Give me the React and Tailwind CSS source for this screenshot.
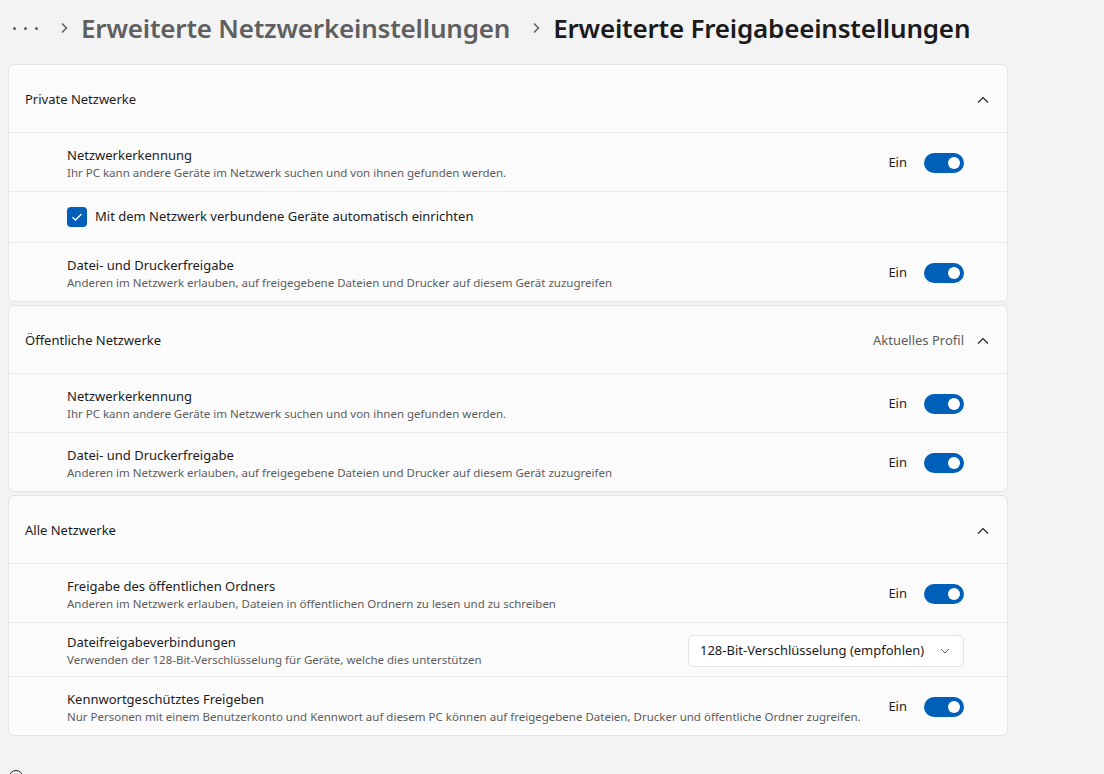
import React from 'react';

const FONT = { fontFamily: '"Noto Sans", "Open Sans", sans-serif' };

const ChevronUp = () => (
    <svg width="12" height="8" viewBox="0 0 12 8" className="text-[#1b1b1b]">
        <path d="M1 6.5 L6 1.5 L11 6.5" fill="none" stroke="currentColor" strokeWidth="1.1" />
    </svg>
);

const ChevronRight = () => (
    <svg width="8" height="12" viewBox="0 0 8 12" className="text-[#5f5f5f]">
        <path d="M2 1.5 L6.5 6 L2 10.5" fill="none" stroke="currentColor" strokeWidth="1.5" />
    </svg>
);

const Toggle = () => (
    <div className="flex items-center gap-[17px]">
        <span className="text-[13px] text-[#1b1b1b]">Ein</span>
        <div className="w-10 h-5 rounded-full bg-[#005fb8] flex items-center justify-end pr-[4px]">
            <div className="w-3 h-3 rounded-full bg-white" />
        </div>
    </div>
);

const CardHeader = ({ title, extra }) => (
    <div className="h-[67px] flex items-center justify-between pl-4 pr-[18px] pt-[2px]">
        <span className="text-[13px] text-[#1b1b1b]">{title}</span>
        <div className="flex items-center gap-[13px]">
            {extra && <span className="text-[13px] text-[#5d5d5d]">{extra}</span>}
            <ChevronUp />
        </div>
    </div>
);

const Row = ({ title, desc, height = 'h-[59px]', children }) => (
    <div className={`${height} border-t border-[#ebebeb] flex items-center justify-between pl-[58px] pr-[43px] pt-[2px]`}>
        <div className="flex flex-col">
            <span className="text-[13px] leading-[19px] text-[#1b1b1b]">{title}</span>
            <span className="text-[11.5px] leading-[16px] text-[#5d5d5d]">{desc}</span>
        </div>
        {children}
    </div>
);

const DESC_DISCOVERY = 'Ihr PC kann andere Geräte im Netzwerk suchen und von ihnen gefunden werden.';
const DESC_SHARING = 'Anderen im Netzwerk erlauben, auf freigegebene Dateien und Drucker auf diesem Gerät zuzugreifen';

const App = () => {
    return (
        <div className="w-[1104px] h-[774px] overflow-hidden bg-[#f3f3f3]" style={FONT}>
            {/* Breadcrumb */}
            <div className="h-[56px] flex items-center pl-[13px]">
                <div className="flex items-center gap-[8px]">
                    <div className="w-[3px] h-[3px] rounded-full bg-[#5f5f5f]" />
                    <div className="w-[3px] h-[3px] rounded-full bg-[#5f5f5f]" />
                    <div className="w-[3px] h-[3px] rounded-full bg-[#5f5f5f]" />
                </div>
                <div className="ml-[22px] mr-[13px]"><ChevronRight /></div>
                <span className="text-[26px] font-semibold text-[#5f5f5f] tracking-[-0.2px]">Erweiterte Netzwerkeinstellungen</span>
                <div className="ml-[22px] mr-[13px]"><ChevronRight /></div>
                <span className="text-[26px] font-semibold text-[#1b1b1b] tracking-[-0.2px]">Erweiterte Freigabeeinstellungen</span>
            </div>

            <div className="pl-2 w-[1008px] flex flex-col gap-[3px] mt-[8px]">
                {/* Private */}
                <div className="bg-[#fbfbfb] border border-[#e5e5e5] rounded-md">
                    <CardHeader title="Private Netzwerke" />
                    <Row title="Netzwerkerkennung" desc={DESC_DISCOVERY}>
                        <Toggle />
                    </Row>
                    <div className="h-[51px] border-t border-[#ebebeb] flex items-center pl-[58px]">
                        <div className="w-5 h-5 rounded-[4px] bg-[#005fb8] flex items-center justify-center">
                            <svg width="12" height="10" viewBox="0 0 12 10">
                                <path d="M1.5 5.2 L4.5 8 L10.5 2" fill="none" stroke="white" strokeWidth="1.3" />
                            </svg>
                        </div>
                        <span className="ml-[8px] text-[13px] text-[#1b1b1b]">Mit dem Netzwerk verbundene Geräte automatisch einrichten</span>
                    </div>
                    <Row title="Datei- und Druckerfreigabe" desc={DESC_SHARING}>
                        <Toggle />
                    </Row>
                </div>

                {/* Public */}
                <div className="bg-[#fbfbfb] border border-[#e5e5e5] rounded-md">
                    <CardHeader title="Öffentliche Netzwerke" extra="Aktuelles Profil" />
                    <Row title="Netzwerkerkennung" desc={DESC_DISCOVERY}>
                        <Toggle />
                    </Row>
                    <Row title="Datei- und Druckerfreigabe" desc={DESC_SHARING}>
                        <Toggle />
                    </Row>
                </div>

                {/* All */}
                <div className="bg-[#fbfbfb] border border-[#e5e5e5] rounded-md">
                    <CardHeader title="Alle Netzwerke" />
                    <Row title="Freigabe des öffentlichen Ordners" desc="Anderen im Netzwerk erlauben, Dateien in öffentlichen Ordnern zu lesen und zu schreiben">
                        <Toggle />
                    </Row>
                    <Row title="Dateifreigabeverbindungen" desc="Verwenden der 128-Bit-Verschlüsselung für Geräte, welche dies unterstützen" height="h-[54px]">
                        <div className="w-[276px] h-[32px] bg-white border border-[#e5e5e5] rounded-[5px] flex items-center justify-between pl-[11px] pr-[13px]">
                            <span className="text-[13px] whitespace-nowrap text-[#1b1b1b]">128-Bit-Verschlüsselung (empfohlen)</span>
                            <svg width="10" height="6" viewBox="0 0 10 6" className="text-[#5d5d5d]">
                                <path d="M1 1 L5 5 L9 1" fill="none" stroke="currentColor" strokeWidth="1" />
                            </svg>
                        </div>
                    </Row>
                    <Row title="Kennwortgeschütztes Freigeben" desc="Nur Personen mit einem Benutzerkonto und Kennwort auf diesem PC können auf freigegebene Dateien, Drucker und öffentliche Ordner zugreifen." height="h-[59px]">
                        <Toggle />
                    </Row>
                </div>
            </div>

            {/* Help link, cut off at the bottom */}
            <div className="mt-[34px] pl-[9px] flex items-start gap-[28px]">
                <div className="w-[14px] h-[14px] rounded-full border border-[#1b1b1b]" />
                <span className="text-[13px] text-[#005fb8] pt-[2px]">Hilfe anfordern</span>
            </div>
        </div>
    );
};

export default App;
